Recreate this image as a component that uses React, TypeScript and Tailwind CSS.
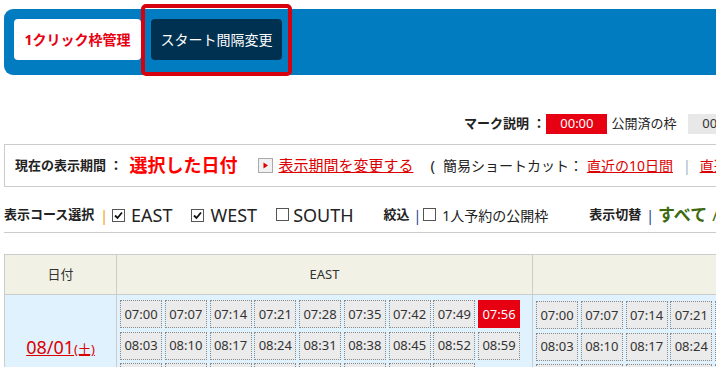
import React from "react";

const F = "font-['Noto_Sans','Noto_Sans_CJK_JP',sans-serif]";

function Slot({ t, red }: { t: string; red?: boolean }) {
  if (red) {
    return (
      <div className="w-[42px] h-[28px] bg-[#e60012] text-white text-[13px] flex items-center justify-center leading-none">
        {t}
      </div>
    );
  }
  return (
    <div className="w-[42px] h-[28px] bg-[#ebebeb] border border-dotted border-[#8a8a8a] text-[#333] text-[13px] flex items-center justify-center leading-none">
      {t}
    </div>
  );
}

function Check({ on }: { on?: boolean }) {
  return (
    <span className="inline-flex w-[13px] h-[13px] border border-[#555] bg-white items-center justify-center">
      {on && (
        <svg width="11" height="11" viewBox="0 0 11 11">
          <path d="M2 5.5 L4.5 8 L9 2.5" stroke="#111" strokeWidth="1.8" fill="none" />
        </svg>
      )}
    </span>
  );
}

const east1 = ["07:00", "07:07", "07:14", "07:21", "07:28", "07:35", "07:42", "07:49", "07:56"];
const east2 = ["08:03", "08:10", "08:17", "08:24", "08:31", "08:38", "08:45", "08:52", "08:59"];
const east3 = ["09:06", "09:13", "09:20", "09:27", "09:34", "09:41", "09:48", "09:55"];

export default function App() {
  return (
    <div className={`w-[716px] h-[367px] overflow-hidden bg-white text-[#222] ${F}`}>
      <div className="w-[1200px] pl-[4px]">
        {/* Top blue bar */}
        <div className="relative mt-[9px] h-[66px] bg-[#027cc0] rounded-l-[9px] flex items-start gap-[10px] pl-[10px] pt-[10px]">
          <div className="w-[127px] h-[41px] bg-white rounded-[4px] flex items-center justify-center text-[14px] font-bold text-[#e60012]">
            1クリック枠管理
          </div>
          <div className="w-[131px] h-[41px] bg-[#003150] rounded-[4px] flex items-center justify-center text-[14px] text-white">
            スタート間隔変更
          </div>
          <div className="absolute left-[137px] top-[-5px] w-[151px] h-[72px] border-[4px] border-[#d7000f] rounded-[5px]" />
        </div>

        {/* Mark explanation */}
        <div className="mt-[39px] h-[20px] flex items-center pl-[460px] text-[13px] whitespace-nowrap">
          <span className="font-bold">マーク説明 ：</span>
          <span className="ml-[1px] w-[61px] h-[20px] bg-[#e60012] text-white flex items-center justify-center">00:00</span>
          <span className="ml-[4px]">公開済の枠</span>
          <span className="ml-[12px] w-[61px] h-[20px] bg-[#e8e8e8] text-[#333] flex items-center justify-center">00:00</span>
          <span className="ml-[4px]">非公開の枠</span>
        </div>

        {/* Period box */}
        <div className="mt-[10px] h-[43px] border border-[#cccccc] flex items-center pl-[10px] whitespace-nowrap">
          <span className="text-[13px] font-bold">現在の表示期間 ：</span>
          <span className="ml-[7px] text-[18px] font-bold text-[#ff0000]">選択した日付</span>
          <span className="ml-[21px] w-[15px] h-[15px] border border-[#aaa] bg-[#f1f1f1] flex items-center justify-center">
            <svg width="7" height="7" viewBox="0 0 7 7">
              <path d="M1.5 0.5 L6 3.5 L1.5 6.5 Z" fill="#d00" />
            </svg>
          </span>
          <span className="ml-[5px] text-[15px] text-[#d00] underline">表示期間を変更する</span>
          <span className="ml-[17px] text-[15px]">(</span>
          <span className="ml-[8px] text-[14px]">簡易ショートカット：</span>
          <span className="ml-[4px] text-[14px] text-[#d00] underline">直近の10日間</span>
          <span className="ml-[10px] text-[14px] text-[#9ab0c4]">|</span>
          <span className="ml-[9px] text-[14px] text-[#d00] underline">直近の30日間</span>
        </div>

        {/* Course select row */}
        <div className="pt-[14px] pb-[3px] border-b border-[#cccccc] whitespace-nowrap">
          <div className="h-[28px] flex items-center">
            <span className="text-[13px] font-bold">表示コース選択</span>
            <span className="ml-[6px] text-[14px] text-[#f39800]">|</span>
            <span className="ml-[4px]"><Check on /></span>
            <span className="ml-[6px] text-[18px] leading-none">EAST</span>
            <span className="ml-[19px]"><Check on /></span>
            <span className="ml-[6px] text-[18px] leading-none">WEST</span>
            <span className="ml-[19px]"><Check /></span>
            <span className="ml-[4px] text-[18px] leading-none">SOUTH</span>
            <span className="ml-[30px] text-[13px] font-bold">絞込</span>
            <span className="ml-[4px] text-[14px] text-[#1a3d8f]">|</span>
            <span className="ml-[2px]"><Check /></span>
            <span className="ml-[6px] text-[14px]">1人予約の公開枠</span>
            <span className="ml-[41px] text-[13px] font-bold">表示切替</span>
            <span className="ml-[5px] text-[14px] text-[#1a3d8f]">|</span>
            <span className="ml-[4px] text-[17px] font-bold text-[#3d6a10]">すべて</span>
            <span className="ml-[5px] text-[17px] text-[#3d6a10]">/</span>
          </div>
        </div>

        {/* Table */}
        <div className="mt-[21px] w-max border-l border-t border-[#cccccc] text-[#333]">
          <div className="flex">
            <div className="w-[112px] h-[40px] border-r border-b border-[#cccccc] bg-[#f2f1e6] flex items-center justify-center text-[13px]">
              日付
            </div>
            <div className="w-[416px] h-[40px] border-r border-b border-[#cccccc] bg-[#f2f1e6] flex items-center justify-center text-[13px]">
              EAST
            </div>
            <div className="w-[416px] h-[40px] border-r border-b border-[#cccccc] bg-[#f2f1e6] flex items-center justify-center text-[13px]">
              WEST
            </div>
          </div>
          <div className="flex">
            <div className="w-[112px] h-[106px] border-r border-b border-[#cccccc] bg-[#dff2fd] flex items-center justify-center">
              <span className="text-[#d00] underline">
                <span className="text-[18px]">08/01</span>
                <span className="text-[13px]">(土)</span>
              </span>
            </div>
            <div className="w-[416px] h-[106px] border-r border-b border-[#cccccc] bg-[#dff2fd] pl-[3px] pt-[5px] flex flex-col gap-y-[3.5px]">
              <div className="flex gap-x-[2.75px]">{east1.map((t, i) => <Slot key={t} t={t} red={i === 8} />)}</div>
              <div className="flex gap-x-[2.75px]">{east2.map((t) => <Slot key={t} t={t} />)}</div>
              <div className="flex gap-x-[2.75px]">{east3.map((t) => <Slot key={t} t={t} />)}</div>
            </div>
            <div className="w-[416px] h-[106px] border-r border-b border-[#cccccc] bg-[#dff2fd] pl-[3px] pt-[6px] flex flex-col gap-y-[3.5px]">
              <div className="flex gap-x-[2.75px]">{east1.map((t) => <Slot key={t} t={t} />)}</div>
              <div className="flex gap-x-[2.75px]">{east2.map((t) => <Slot key={t} t={t} />)}</div>
              <div className="flex gap-x-[2.75px]">{east3.map((t) => <Slot key={t} t={t} />)}</div>
            </div>
          </div>
        </div>
      </div>
    </div>
  );
}
